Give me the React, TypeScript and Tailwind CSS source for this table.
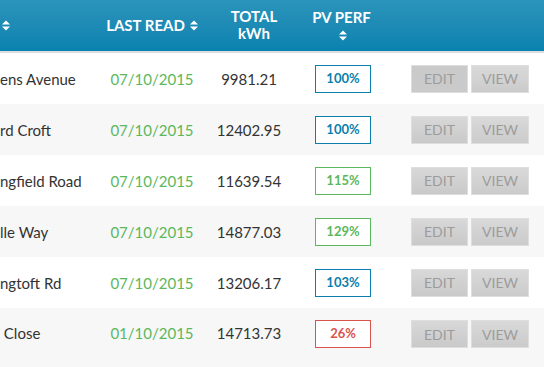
import React from 'react';

type Perf = 'blue' | 'green' | 'red';

const rows: { address: string; date: string; kwh: string; perf: string; tone: Perf }[] = [
  { address: 'ens Avenue', date: '07/10/2015', kwh: '9981.21', perf: '100%', tone: 'blue' },
  { address: 'rd Croft', date: '07/10/2015', kwh: '12402.95', perf: '100%', tone: 'blue' },
  { address: 'ngfield Road', date: '07/10/2015', kwh: '11639.54', perf: '115%', tone: 'green' },
  { address: 'lle Way', date: '07/10/2015', kwh: '14877.03', perf: '129%', tone: 'green' },
  { address: 'ngtoft Rd', date: '07/10/2015', kwh: '13206.17', perf: '103%', tone: 'blue' },
  { address: ' Close', date: '01/10/2015', kwh: '14713.73', perf: '26%', tone: 'red' },
];

const toneClass: Record<Perf, string> = {
  blue: 'border-[#0a7fad] text-[#0a7fad]',
  green: 'border-[#5cb85c] text-[#5cb85c]',
  red: 'border-[#d9534f] text-[#d9534f]',
};

// up/down sort arrows
function SortIcon() {
  return (
    <svg width="8" height="11" viewBox="0 0 8 11" className="shrink-0">
      <path d="M0 4.6 L4 0.4 L8 4.6 Z" fill="white" />
      <path d="M0 6.4 L8 6.4 L4 10.6 Z" fill="white" />
    </svg>
  );
}

export default function App() {
  return (
    <div
      className="min-h-screen w-[544px] overflow-hidden bg-[#f7f7f7] text-[#333]"
      style={{ fontFamily: 'Lato, "Open Sans", sans-serif' }}
    >
      {/* Header */}
      <div className="flex h-[51px] bg-gradient-to-b from-[#2b94ba] to-[#0982b0] text-[15px] font-bold text-white">
        <div className="flex w-[100px] items-center pl-[2px]">
          <SortIcon />
        </div>
        <div className="flex w-[104px] items-center justify-center gap-[5px] pb-[1px]">
          <span>LAST READ</span>
          <SortIcon />
        </div>
        <div className="flex w-[90px] flex-col items-center justify-center pb-[1px] pl-[10px] leading-[17px]">
          <span>TOTAL</span>
          <span>kWh</span>
        </div>
        <div className="flex w-[98px] flex-col items-center justify-center gap-[6px] pb-[1px]">
          <span className="pr-[3px] leading-[14px]">PV PERF</span>
          <SortIcon />
        </div>
        <div className="flex-1" />
      </div>
      <div className="h-[2px] bg-[#dddddd]" />

      {/* Rows */}
      {rows.map((r, i) => (
        <div
          key={i}
          className={`flex items-center text-[15px] ${i % 2 === 0 ? 'bg-white' : 'bg-[#f7f7f7]'} ${i === rows.length - 1 ? 'h-[60px] items-start pt-[12px]' : 'h-[51px]'}`}
        >
          <div className="w-[100px] whitespace-pre pt-[2px]">{r.address}</div>
          <div className="w-[104px] pt-[2px] text-center text-[#5cb85c]">{r.date}</div>
          <div className="w-[90px] pt-[2px] text-center">{r.kwh}</div>
          <div className="flex w-[98px] justify-center">
            <div
              className={`flex h-[28px] w-[56px] items-center justify-center border bg-white text-[13px] font-bold ${toneClass[r.tone]}`}
            >
              {r.perf}
            </div>
          </div>
          <div className="flex gap-[3px] pl-[19px]">
            <button
              className={`h-[28px] w-[57px] border border-[#dedede] text-[14px] text-[#9c9c9c] ${i === 0 ? 'bg-[#cacaca]' : 'bg-gradient-to-b from-[#d8d8d8] to-[#c9c9c9]'}`}
            >
              EDIT
            </button>
            <button className="h-[28px] w-[58px] border border-[#dedede] bg-gradient-to-b from-[#d9d9d9] to-[#cbcbcb] text-[14px] text-[#9c9c9c]">
              VIEW
            </button>
          </div>
        </div>
      ))}
    </div>
  );
}
